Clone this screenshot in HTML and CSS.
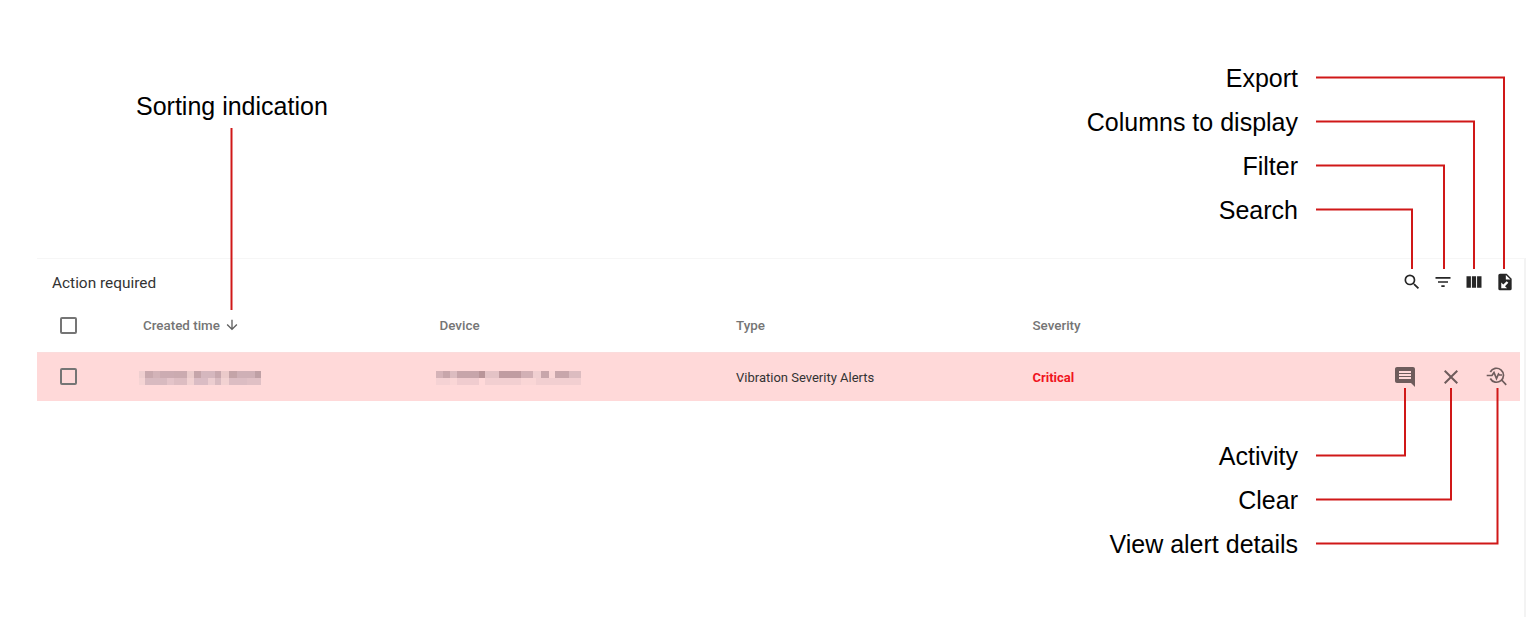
FILE: index.html
```html
<!DOCTYPE html>
<html lang="en">
<head>
<meta charset="utf-8">
<title>Action required</title>
<link rel="stylesheet" href="styles.css">
</head>
<body>
<main class="panel">
  <header class="toolbar">
    <h1 class="title">Action required</h1>
    <div class="tools">
      <svg class="tool" viewBox="0 0 24 24"><path d="M15.5 14h-.79l-.28-.27A6.47 6.47 0 0 0 16 9.5 6.5 6.5 0 1 0 9.5 16c1.61 0 3.09-.59 4.23-1.57l.27.28v.79l5 4.99L20.49 19l-4.99-5zm-6 0C7.01 14 5 11.99 5 9.5S7.01 5 9.5 5 14 7.01 14 9.5 11.99 14 9.5 14z"/></svg>
      <svg class="tool" viewBox="0 0 24 24"><path d="M10 18h4v-2h-4v2zM3 6v2h18V6H3zm3 7h12v-2H6v2z"/></svg>
      <svg class="tool" viewBox="0 0 24 24"><path d="M3 5h5.300v14H3zM9.500 5h5v14h-5zM15.700 5H21v14h-5.300z"/></svg>
      <svg class="tool doc" viewBox="0 0 24 24"><path d="M14 2H6a2 2 0 0 0-2 2v16a2 2 0 0 0 2 2h12a2 2 0 0 0 2-2V8l-6-6zm-1 7V3.500L18.500 9H13zM7.500 12.500v7h7l-2.500-2.500 4-4-2-2-4 4-2.500-2.500z"/></svg>
    </div>
  </header>
  <div class="row head">
    <span class="check"></span>
    <span class="cell">Created time <svg class="sort" viewBox="0 0 24 24"><path d="M20 12l-1.410-1.410L13 16.170V4h-2v12.170l-5.580-5.590L4 12l8 8 8-8z"/></svg></span>
    <span class="cell">Device</span>
    <span class="cell">Type</span>
    <span class="cell">Severity</span>
  </div>
  <div class="row alert">
    <span class="check"></span>
    <span class="cell"><span class="blur blur-time"></span></span>
    <span class="cell"><span class="blur blur-device"></span></span>
    <span class="cell type">Vibration Severity Alerts</span>
    <span class="cell critical">Critical</span>
    <div class="actions">
      <svg class="action" viewBox="0 0 24 24"><path d="M21.990 4c0-1.100-.89-2-1.990-2H4c-1.100 0-2 .9-2 2v12c0 1.100.9 2 2 2h14l4 4-.01-18zM18 14H6v-2h12v2zm0-3H6V9h12v2zm0-3H6V6h12v2z"/></svg>
      <svg class="action" viewBox="0 0 24 24"><path d="M19 6.410 17.590 5 12 10.590 6.410 5 5 6.410 10.590 12 5 17.590 6.410 19 12 13.410 17.590 19 19 17.590 13.410 12z"/></svg>
      <svg class="action" viewBox="0 0 24 24"><path class="ring" d="M6.300 7A7 7 0 1 1 6.300 13.500M17.700 15l4.500 4.800M2.700 10.500H8l2-3 2.500 6 2-4.500 1 1H18"/></svg>
    </div>
  </div>
</main>

<svg class="leaders" viewBox="0 0 1539 617">
  <path d="M231.500 128V310"/>
  <path d="M1316 77.500H1504V269"/>
  <path d="M1316 121.500H1474V269"/>
  <path d="M1316 165.500H1444V269"/>
  <path d="M1316 209.500H1412V269"/>
  <path d="M1405 388V455.500H1316"/>
  <path d="M1451 388V499.500H1316"/>
  <path d="M1497.500 388V543.500H1316"/>
</svg>
<span class="label sorting">Sorting indication</span>
<span class="label right l-export">Export</span>
<span class="label right l-columns">Columns to display</span>
<span class="label right l-filter">Filter</span>
<span class="label right l-search">Search</span>
<span class="label right l-activity">Activity</span>
<span class="label right l-clear">Clear</span>
<span class="label right l-view">View alert details</span>
</body>
</html>
```
FILE: styles.css
```css
* { box-sizing: border-box; }
html, body { margin: 0; height: 617px; overflow: hidden; background: #fff; }
body { padding: 258px 0 0 37px; font-family: Roboto, sans-serif; position: relative; }

.panel {
  width: 1489px;
  height: 359px;
  border-top: 1px solid #f6f6f6;
  border-right: 2px solid #f3f3f3;
  padding-right: 4px;
}

.toolbar { display: flex; align-items: center; justify-content: space-between; height: 47px; padding: 0 5px 0 15px; }
.title { margin: 0; font-size: 15.400px; font-weight: 400; color: #333; }
.tools { display: flex; align-items: center; margin-top: -1px; }
.tool { width: 20px; height: 20px; margin-left: 11px; fill: #262626; }
.doc { fill-rule: evenodd; }

.row { display: grid; grid-template-columns: 83px 296.500px 296.500px 296.500px 1fr auto; align-items: center; padding-left: 23px; }
.head { height: 46px; padding-bottom: 8px; font-size: 13.400px; font-weight: 500; color: #757575; }
.alert { height: 49px; background: #ffd9d9; border-top: 1px solid #fbdcdc; font-size: 13px; color: #333; }
.alert .check { margin-top: -2px; }
.cell { display: flex; align-items: center; white-space: nowrap; }

.check { display: block; width: 17px; height: 17px; border: 2px solid #757575; border-radius: 2px; }
.sort { width: 16px; height: 16px; margin-left: 4px; fill: #5f5f5f; }

.critical { font-weight: 700; color: #f0141e; }

.blur { display: block; margin-top: 1px; background-repeat: no-repeat; }
.blur-time {
  width: 122px; height: 14px; margin-left: -4px;
  background-image:
    linear-gradient(90deg, #efcfd0 0 6px, #c9a9ae 6px 14px, #d3b3b8 14px 21px, #ccacb2 21px 35px, #cbabb0 35px 48px, #ebcccc 48px 55px, #c5a5aa 55px 62px, #d5b7be 62px 76px, #c8a8ae 76px 82px, #ebcaca 82px 90px, #c4a4a8 90px 98px, #cfb0b6 98px 116px, #bfa0a5 116px 122px),
    linear-gradient(90deg, #f5d4d4 0 6px, #d8bac0 6px 28px, #e4c4c9 28px 35px, #ddbdc2 35px 48px, #f2d2d2 48px 55px, #dabcc4 55px 69px, #eccdd0 69px 76px, #d8bac0 76px 82px, #f2d2d2 82px 90px, #dcbdc3 90px 108px, #e0c0c5 108px 122px);
  background-size: 100% 7px;
  background-position: top, bottom;
}
.blur-device {
  width: 145px; height: 14px; margin-left: -4px;
  background-image:
    linear-gradient(90deg, #d5b3b8 0 7px, #c8a6ab 7px 14px, #dcbcc0 14px 21px, #c7a5aa 21px 43px, #b99599 43px 49px, #e4c3c6 49px 63px, #c09ca1 63px 85px, #d2b0b5 85px 97px, #f0cfd1 97px 105px, #c8a6ab 105px 113px, #fad6d6 113px 119px, #c8a6ab 119px 133px, #dcbcc0 133px 145px),
    linear-gradient(90deg, #f5d2d4 0 14px, #fad6d6 14px 21px, #f0cccf 21px 43px, #ffd9d9 43px 49px, #f2cfd1 49px 85px, #fad6d6 85px 100px, #f2cfd1 100px 145px);
  background-size: 100% 7px;
  background-position: top, bottom;
}

.actions { display: flex; align-items: center; gap: 21.500px; padding-right: 12px; }
.action { width: 24px; height: 24px; fill: #6e5c5c; }
.ring { fill: none; stroke: #6e5c5c; stroke-width: 1.700; }

.leaders { position: absolute; left: 0; top: 0; width: 1539px; height: 617px; pointer-events: none; }
.leaders path { fill: none; stroke: #d01818; stroke-width: 2; }

.label { position: absolute; font-family: "Liberation Sans", Arial, sans-serif; font-size: 25px; line-height: 30px; color: #000; white-space: nowrap; }
.right { right: 241px; }
.sorting { left: 136px; top: 91px; }
.l-export { top: 63px; }
.l-columns { top: 107px; }
.l-filter { top: 151px; }
.l-search { top: 195px; }
.l-activity { top: 441px; }
.l-clear { top: 485px; }
.l-view { top: 529px; }
```
